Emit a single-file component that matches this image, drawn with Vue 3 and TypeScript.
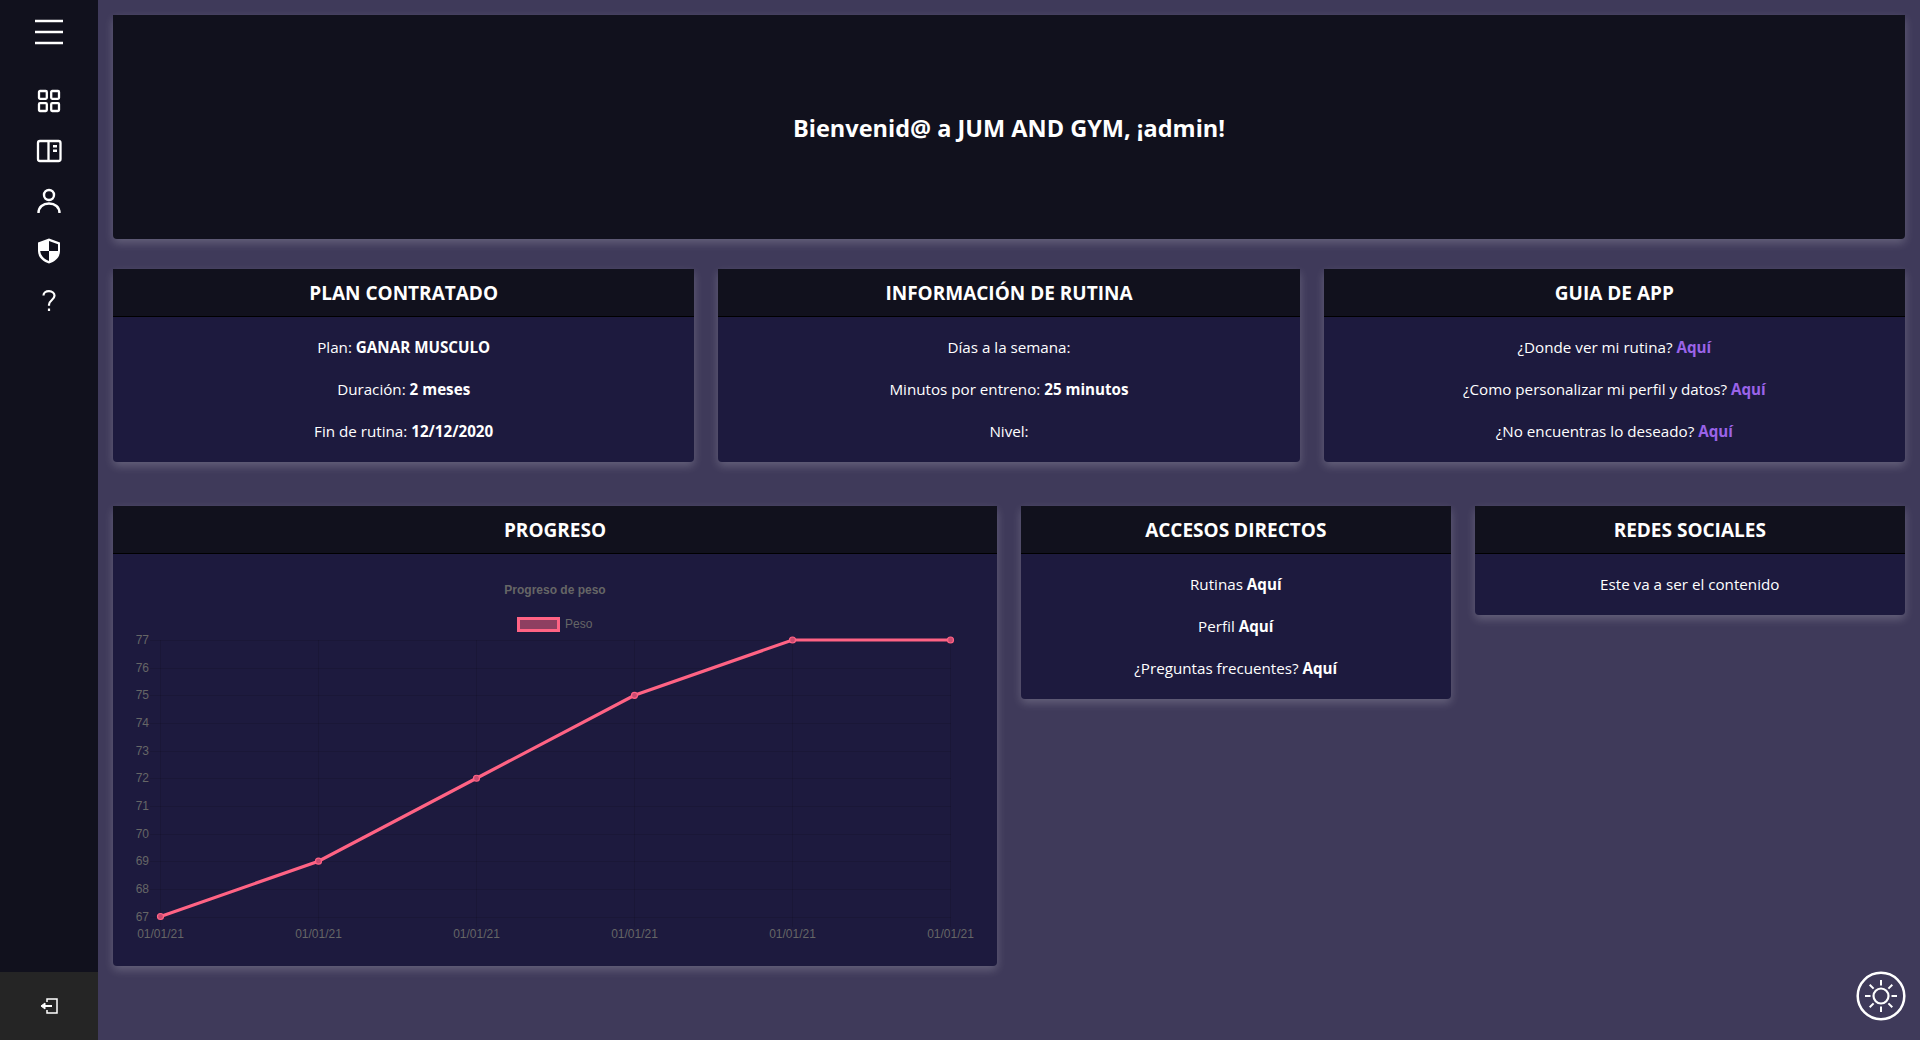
<template>
  <div class="layout">
    <aside class="sidebar">
      <div class="menu-top">
        <button class="burger">
          <svg width="28" height="26" viewBox="0 0 28 26">
            <path d="M0 2h28M0 13h28M0 24h28" stroke="#fff" stroke-width="2.6" />
          </svg>
        </button>
        <nav class="nav">
          <a class="nav-item">
            <svg width="24" height="24" viewBox="0 0 24 24" fill="none" stroke="#fff" stroke-width="2.3">
              <rect x="2" y="2" width="7.800" height="7.800" rx="1" />
              <rect x="14.200" y="2" width="7.800" height="7.800" rx="1" />
              <rect x="2" y="14.200" width="7.800" height="7.800" rx="1" />
              <rect x="14.200" y="14.200" width="7.800" height="7.800" rx="1" />
            </svg>
          </a>
          <a class="nav-item">
            <svg width="26" height="24" viewBox="0 0 26 24" fill="none" stroke="#fff" stroke-width="2.3">
              <rect x="2" y="2" width="22.500" height="20" rx="2" />
              <path d="M12.500 2v20" />
              <path d="M17 7.200h4M17 11.700h4" stroke-width="2.400" />
            </svg>
          </a>
          <a class="nav-item">
            <svg width="24" height="26" viewBox="0 0 24 26" fill="none" stroke="#fff" stroke-width="2.4">
              <circle cx="12" cy="7" r="5" />
              <path d="M1.500 25c0-6 4.500-9.500 10.500-9.500s10.500 3.500 10.500 9.500" />
            </svg>
          </a>
          <a class="nav-item">
            <svg width="24" height="26" viewBox="0 0 24 26">
              <path d="M12 .500 1 4.500v8.500c0 6 4.500 10.500 11 12.500 6.500-2 11-6.500 11-12.500V4.500z" fill="#fff" />
              <path d="M12 3v10h9V6.300zM12 13H3.200c.500 4.700 4 8.300 8.800 10z" fill="#11111d" />
            </svg>
          </a>
          <a class="nav-item">
            <svg width="14" height="22" viewBox="0 0 14 22" fill="none" stroke="#fff" stroke-width="2.200">
              <path d="M1.500 5.500C1.500 3 3.800 1.200 7 1.200s5.500 1.900 5.500 4.600c0 4-5.500 4.500-5.500 9v1" />
              <path d="M7 18.500v2.500" />
            </svg>
          </a>
        </nav>
      </div>
      <div class="logout">
        <svg width="18" height="16" viewBox="0 0 18 16" fill="none" stroke="#fff" stroke-width="1.500">
          <path d="M7 4V1h10v14H7v-3" />
          <path d="M4 8h8" stroke-width="2" />
          <path d="M1 8l4-3v6z" fill="#fff" stroke-width="1" />
        </svg>
      </div>
    </aside>

    <main class="content">
      <section class="hero">
        <h1>Bienvenid@ a JUM AND GYM, ¡admin!</h1>
      </section>

      <section class="row row-three">
        <article v-for="card in infoCards" :key="card.title" class="card">
          <header class="card-head">{{ card.title }}</header>
          <div class="card-body">
            <p v-for="line in card.lines" :key="line.text">
              {{ line.text }} <b :class="{ link: line.link }">{{ line.value }}</b>
            </p>
          </div>
        </article>
      </section>

      <section class="row row-bottom">
        <article class="card">
          <header class="card-head">PROGRESO</header>
          <svg class="chart" width="884" height="412" viewBox="113 554 884 412">
            <text class="chart-title" x="555" y="594" text-anchor="middle">Progreso de peso</text>
            <rect x="518.500" y="618.500" width="40" height="12" fill="rgba(255,99,132,0.5)" stroke="#ff6384" stroke-width="3" />
            <text class="tick" x="565" y="628">Peso</text>
            <g stroke="rgba(0,0,0,0.1)" stroke-width="1">
              <line v-for="t in yTicks" :key="t.label" x1="150" x2="951" :y1="t.y" :y2="t.y" />
              <line v-for="(x, i) in xs" :key="i" :x1="x" :x2="x" y1="640" y2="927" />
            </g>
            <text v-for="t in yTicks" :key="t.label" class="tick" x="149" :y="t.y + 3" text-anchor="end">{{ t.label }}</text>
            <text v-for="(x, i) in xs" :key="i" class="tick" :x="x" y="938" text-anchor="middle">01/01/21</text>
            <polyline :points="linePoints" fill="none" stroke="#ff6384" stroke-width="3.200" />
            <circle v-for="p in chartPoints" :key="p.x" :cx="p.x" :cy="p.y" r="3" fill="#c94a70" stroke="#ff6384" stroke-width="1.200" />
          </svg>
        </article>

        <article v-for="card in sideCards" :key="card.title" class="card">
          <header class="card-head">{{ card.title }}</header>
          <div class="card-body">
            <p v-for="line in card.lines" :key="line.text">
              {{ line.text }} <b>{{ line.value }}</b>
            </p>
          </div>
        </article>
      </section>
    </main>

    <button class="theme-toggle">
      <svg width="50" height="50" viewBox="0 0 50 50" fill="none" stroke="#fff">
        <circle cx="25" cy="25" r="23.300" stroke-width="2.500" />
        <circle cx="25" cy="25" r="7.500" stroke-width="2.200" />
        <path d="M25 9v5.500M25 35.500V41M9 25h5.500M35.500 25H41M13.700 13.700l3.900 3.900M32.400 32.400l3.900 3.900M36.300 13.700l-3.900 3.900M17.600 32.400l-3.900 3.900" stroke-width="2" />
      </svg>
    </button>
  </div>
</template>

<script setup lang="ts">
import { computed } from 'vue';

interface Line {
  text: string;
  value?: string;
  link?: boolean;
}

const infoCards: { title: string; lines: Line[] }[] = [
  {
    title: 'PLAN CONTRATADO',
    lines: [
      { text: 'Plan:', value: 'GANAR MUSCULO' },
      { text: 'Duración:', value: '2 meses' },
      { text: 'Fin de rutina:', value: '12/12/2020' },
    ],
  },
  {
    title: 'INFORMACIÓN DE RUTINA',
    lines: [
      { text: 'Días a la semana:' },
      { text: 'Minutos por entreno:', value: '25 minutos' },
      { text: 'Nivel:' },
    ],
  },
  {
    title: 'GUIA DE APP',
    lines: [
      { text: '¿Donde ver mi rutina?', value: 'Aquí', link: true },
      { text: '¿Como personalizar mi perfil y datos?', value: 'Aquí', link: true },
      { text: '¿No encuentras lo deseado?', value: 'Aquí', link: true },
    ],
  },
];

const sideCards: { title: string; lines: Line[] }[] = [
  {
    title: 'ACCESOS DIRECTOS',
    lines: [
      { text: 'Rutinas', value: 'Aquí' },
      { text: 'Perfil', value: 'Aquí' },
      { text: '¿Preguntas frecuentes?', value: 'Aquí' },
    ],
  },
  {
    title: 'REDES SOCIALES',
    lines: [{ text: 'Este va a ser el contenido' }],
  },
];

const xs = [160.5, 318.5, 476.5, 634.5, 792.5, 950.5];
const weights = [67, 69, 72, 75, 77, 77];

const toY = (v: number) => 916.5 - (v - 67) * 27.65;

const yTicks = Array.from({ length: 11 }, (_, i) => ({
  label: 77 - i,
  y: Math.round(toY(77 - i)) + 0.5,
}));

const chartPoints = weights.map((w, i) => ({ x: xs[i], y: toY(w) }));
const linePoints = computed(() => chartPoints.map((p) => `${p.x},${p.y}`).join(' '));
</script>

<style>
html,
body {
  margin: 0;
  background: #3f3a5a;
}
</style>

<style scoped>
.layout {
  display: flex;
  height: 1040px;
  overflow: hidden;
  background: #3f3a5a;
  color: #fff;
  font-family: "Open Sans", "Noto Sans", sans-serif;
  font-size: 15.2px;
}

.sidebar {
  width: 98px;
  flex-shrink: 0;
  display: flex;
  flex-direction: column;
  justify-content: space-between;
  background: #11111d;
}

.menu-top {
  display: flex;
  flex-direction: column;
  align-items: center;
  padding-top: 19px;
}

.burger {
  padding: 0;
  border: none;
  background: none;
  height: 26px;
}

.nav {
  display: flex;
  flex-direction: column;
  align-items: center;
  margin-top: 43px;
  gap: 24px;
}

.nav-item {
  display: flex;
  align-items: center;
  justify-content: center;
  height: 26px;
}

.logout {
  height: 68px;
  display: flex;
  align-items: center;
  justify-content: center;
  background: #252525;
}

.content {
  flex: 1;
  min-width: 0;
  padding: 15px 15px 0;
}

.hero {
  height: 224px;
  box-sizing: border-box;
  padding-top: 2px;
  display: flex;
  align-items: center;
  justify-content: center;
  background: #11111d;
  border-radius: 0 0 4px 4px;
  box-shadow: 0 4px 10px rgba(255, 255, 255, 0.2);
}

.hero h1 {
  margin: 0;
  font-size: 23.5px;
  font-weight: 700;
}

.row {
  display: grid;
  align-items: start;
}

.row-three {
  grid-template-columns: repeat(3, 1fr);
  gap: 24px;
  margin-top: 30px;
}

.row-bottom {
  grid-template-columns: 884px 1fr 1fr;
  gap: 23.5px;
  margin-top: 44px;
}

.card {
  background: #1d1a3e;
  border-radius: 0 0 4px 4px;
  box-shadow: 0 4px 10px rgba(255, 255, 255, 0.2);
  overflow: hidden;
}

.card-head {
  height: 46px;
  padding-top: 1px;
  line-height: 47px;
  text-align: center;
  font-size: 19px;
  font-weight: 700;
  background: #11111d;
  border-bottom: 1px solid #000;
}

.card-body {
  display: flex;
  flex-direction: column;
  gap: 16px;
  padding: 17px 10px 18px;
  text-align: center;
}

.card-body p {
  margin: 0;
  line-height: 26px;
}

.card-body b {
  font-weight: 700;
}

.card-body .link {
  color: #9a63e8;
}

.chart {
  display: block;
}

.chart-title {
  font: bold 12px "Liberation Sans", sans-serif;
  fill: #666;
}

.tick {
  font: 12px "Liberation Sans", sans-serif;
  fill: #666;
}

.theme-toggle {
  position: fixed;
  right: 14px;
  bottom: 19px;
  width: 50px;
  height: 50px;
  padding: 0;
  border: none;
  background: none;
}
</style>
